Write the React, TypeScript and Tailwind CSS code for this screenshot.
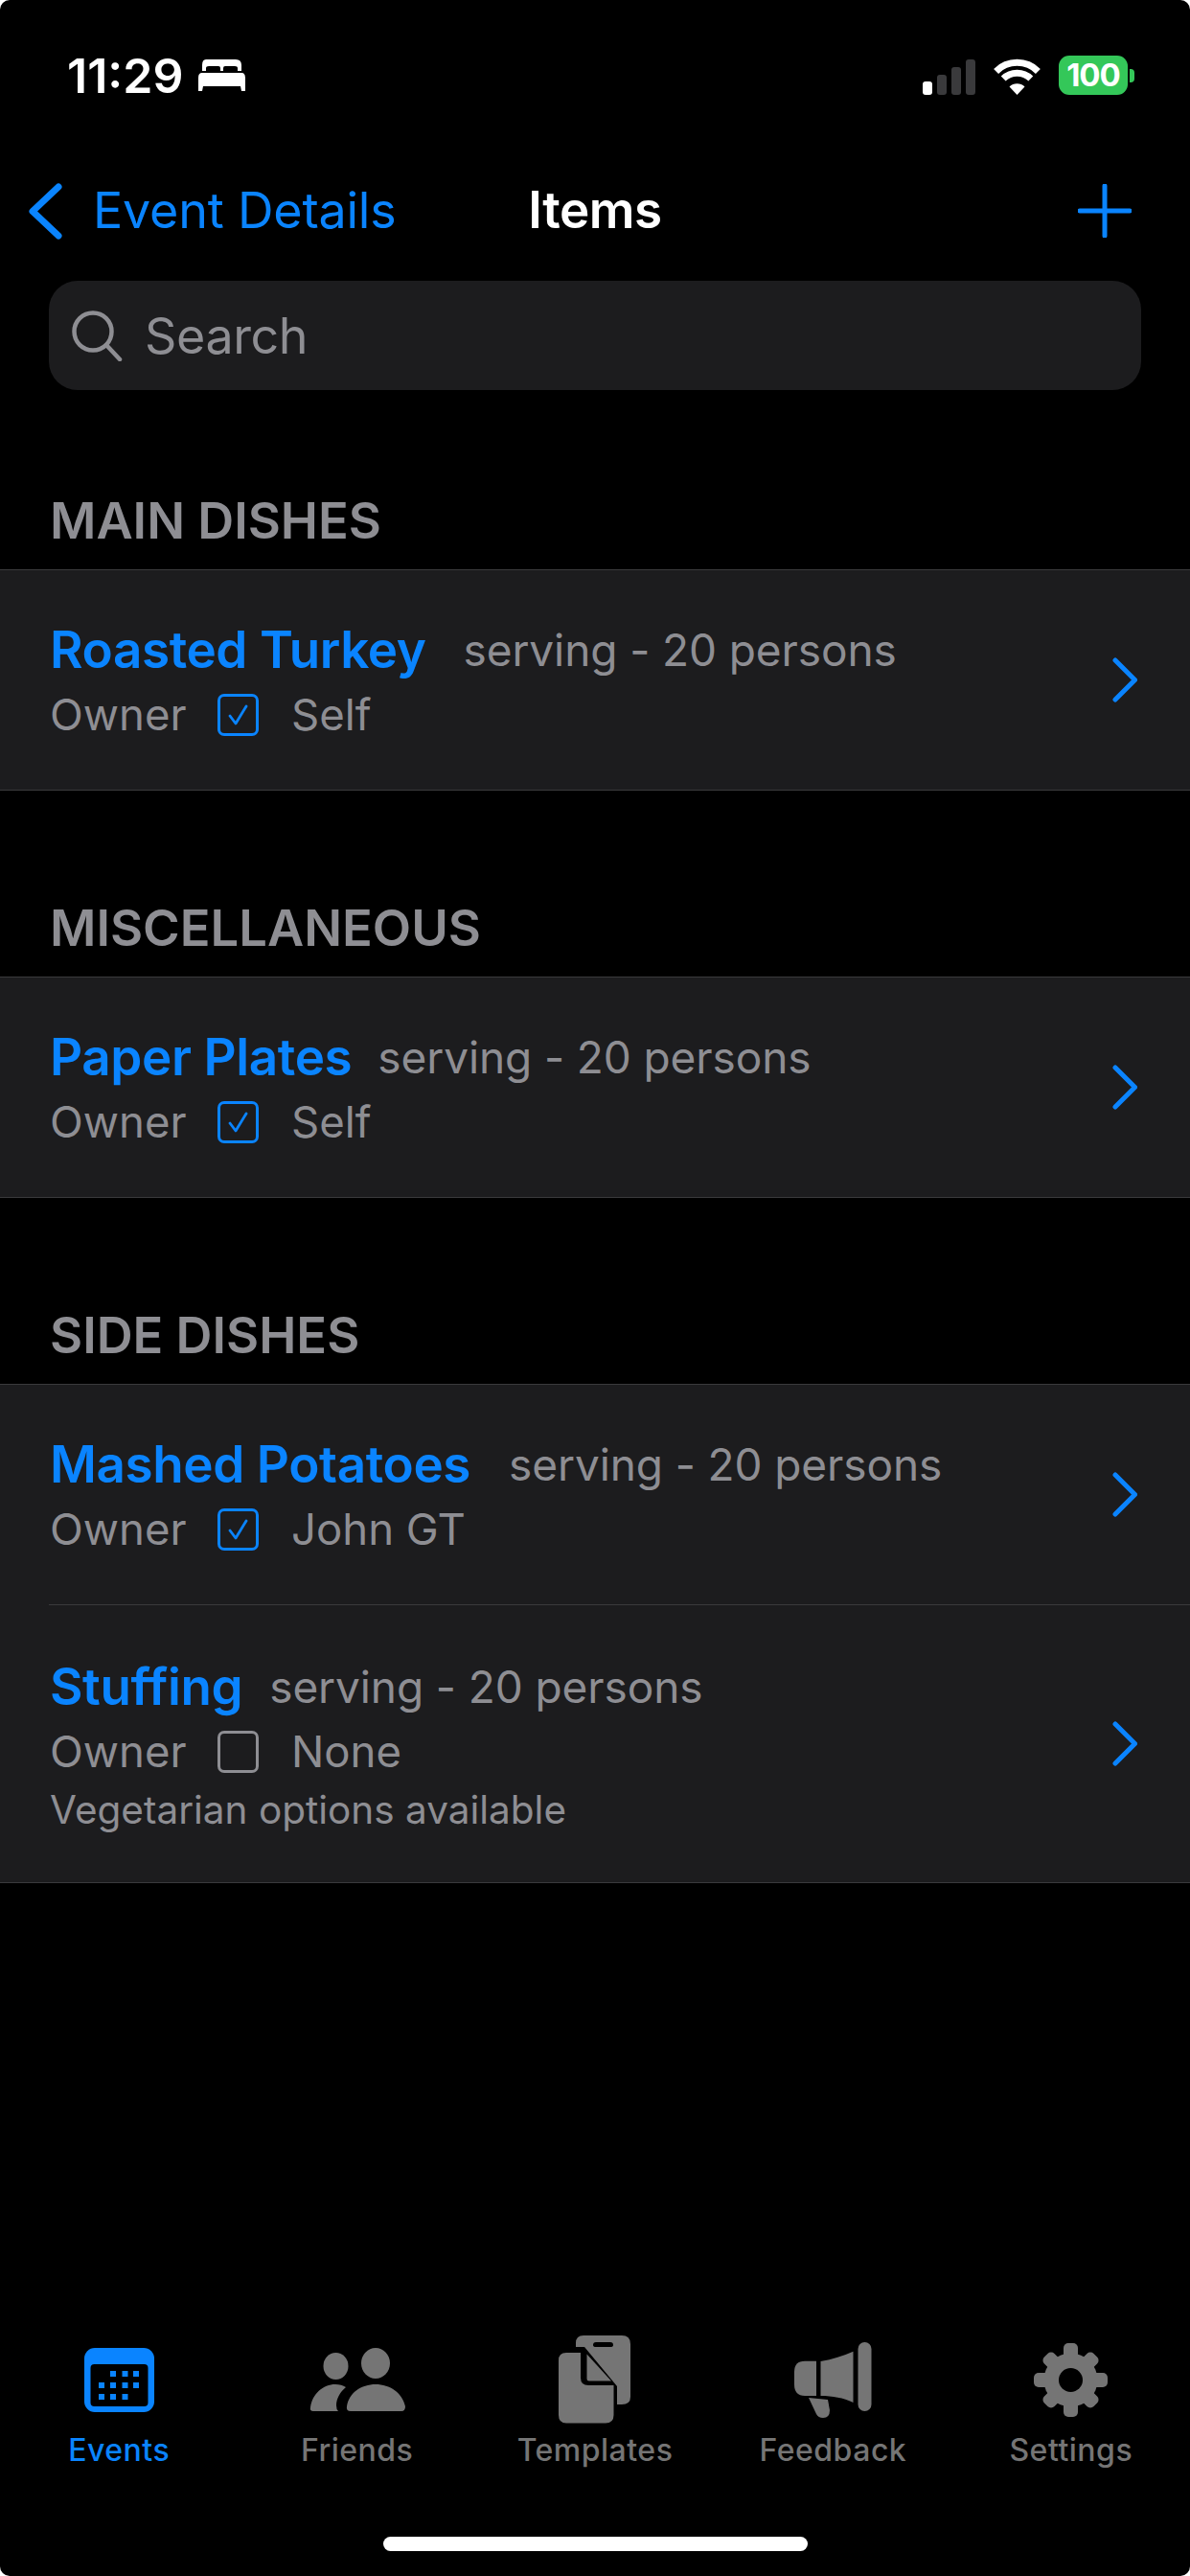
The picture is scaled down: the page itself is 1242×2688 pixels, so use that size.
import React from "react";

const BedIcon = () => (
  <svg width="49" height="33" viewBox="0 0 49 33" fill="#fff">
    <path d="M8 0H39Q45 0 45 6V12H41V9Q41 7 38 7H28Q26 7 26 9V12H23V9Q23 7 21 7H11Q8 7 8 9V12H4V6Q4 0 8 0Z" />
    <path d="M4 14H45Q49 14 49 19V33H45L44 28H5L4 33H0V19Q0 14 4 14Z" />
  </svg>
);

const SignalIcon = () => (
  <div className="flex items-end gap-[5px] h-[37px]">
    <div className="w-[10px] h-[14px] rounded-[3px] bg-white" />
    <div className="w-[10px] h-[21px] rounded-[3px] bg-[#3a3a3c]" />
    <div className="w-[10px] h-[29px] rounded-[3px] bg-[#3a3a3c]" />
    <div className="w-[10px] h-[37px] rounded-[3px] bg-[#3a3a3c]" />
  </div>
);

const WifiIcon = () => (
  <svg width="51" height="38" viewBox="0 0 51 38" fill="none" stroke="#fff" strokeWidth="7">
    <path d="M3.6 13.4A31 31 0 0 1 47.4 13.4" />
    <path d="M11.2 21A20.5 20.5 0 0 1 39.8 21" />
    <path d="M25.5 38L17.5 29.5A11.5 11.5 0 0 1 33.5 29.5Z" fill="#fff" stroke="none" />
  </svg>
);

const BatteryIcon = () => (
  <div className="flex items-center gap-[2px]">
    <div className="w-[72px] h-[41px] rounded-[11px] bg-[#34c759] flex items-center justify-center text-white font-bold text-[33px] leading-none tracking-[-1px]">
      100
    </div>
    <div className="w-[5px] h-[14px] rounded-r-[4px] bg-[#34c759]" />
  </div>
);

const BackChevron = () => (
  <svg width="35" height="59" viewBox="0 0 35 59" fill="none" stroke="#0a84ff" strokeWidth="7" strokeLinecap="round" strokeLinejoin="round">
    <path d="M31 4L4 29.5L31 55" />
  </svg>
);

const PlusIcon = () => (
  <svg width="56" height="56" viewBox="0 0 56 56" fill="none" stroke="#0a84ff" strokeWidth="5" strokeLinecap="round">
    <path d="M28 2V54M2 28H54" />
  </svg>
);

const SearchIcon = () => (
  <svg width="53" height="53" viewBox="0 0 53 53" fill="none" stroke="#8e8e93" strokeWidth="4.5" strokeLinecap="round">
    <circle cx="22" cy="22" r="19.5" />
    <path d="M36 36L50 51" />
  </svg>
);

const RowChevron = () => (
  <svg width="26" height="47" viewBox="0 0 26 47" fill="none" stroke="#0a84ff" strokeWidth="5" strokeLinecap="round" strokeLinejoin="round">
    <path d="M3 3L23.5 23.5L3 44" />
  </svg>
);

const CheckBox = ({ checked }: { checked: boolean }) => (
  <div
    className={`w-[43px] h-[44px] rounded-[7px] border-[3px] flex items-center justify-center ${
      checked ? "border-[#0a84ff]" : "border-[#8e8e93]"
    }`}
  >
    {checked && (
      <svg width="22" height="22" viewBox="0 0 22 22" fill="none" stroke="#0a84ff" strokeWidth="2.8" strokeLinecap="round" strokeLinejoin="round">
        <path d="M2 12L8 20L19 2" />
      </svg>
    )}
  </div>
);

const EventsIcon = () => (
  <svg width="73" height="67" viewBox="0 0 73 67">
    <rect width="73" height="67" rx="11" fill="#0a84ff" />
    <rect x="6.5" y="17" width="60" height="44" rx="4" fill="#000" />
    <g fill="#0a84ff">
      <rect x="27" y="24" width="6" height="6" />
      <rect x="39.5" y="24" width="6" height="6" />
      <rect x="51" y="24" width="6" height="6" />
      <rect x="15" y="36" width="6" height="6" />
      <rect x="27" y="36" width="6" height="6" />
      <rect x="39.5" y="36" width="6" height="6" />
      <rect x="51" y="36" width="6" height="6" />
      <rect x="15" y="48" width="6" height="6" />
      <rect x="27" y="48" width="6" height="6" />
      <rect x="39.5" y="48" width="6" height="6" />
    </g>
  </svg>
);

const FriendsIcon = () => (
  <svg width="100" height="66" viewBox="0 0 100 66" fill="#757575">
    <ellipse cx="27.5" cy="19" rx="13" ry="14" />
    <ellipse cx="69" cy="16" rx="15" ry="16" />
    <path d="M1 62C3 48 14 38 27 38C31 38 35 39 38 41C32 46 28 53 28 60Q28 64 30 66H4Q0 66 1 62Z" />
    <path d="M39 61C41 47 54 38 69 38C84 38 97 47 100 61Q100 66 96 66H43Q38 66 39 61Z" />
  </svg>
);

const TemplatesIcon = () => (
  <svg width="75" height="92" viewBox="0 0 75 92" fill="#757575">
    <path fillRule="evenodd" d="M26 0H66Q75 0 75 9V64Q75 72 66 72H61V53L27 12H18V8Q18 0 26 0ZM39 7Q36 7 36 10Q36 12 39 12H54Q57 12 57 10Q57 7 54 7Z" />
    <path d="M8 18H23V44Q23 52 31 52H57.5V83Q57.5 91.5 49 91.5H8Q0 91.5 0 83V26Q0 18 8 18Z" />
    <path d="M29.5 19.5L55 47.5H32Q29.5 47.5 29.5 45Z" />
  </svg>
);

const FeedbackIcon = () => (
  <svg width="81" height="79" viewBox="0 0 81 79" fill="#757575">
    <rect x="66.5" y="0" width="14" height="72" rx="7" />
    <path d="M27.5 20C40 18 51 14 61.5 9.7V63C51 58 40 56 27.5 56Z" />
    <path d="M11 19.7H23V56H11Q0 56 0 44V31Q0 19.7 11 19.7Z" />
    <path d="M15 58L35 60L37 71Q37 79 30 79Q25 79 23 75Z" />
  </svg>
);

const SettingsIcon = () => (
  <svg width="77" height="77" viewBox="0 0 77 77" fill="#757575">
    <circle cx="38.5" cy="38.5" r="28" />
    <rect x="31" y="0" width="15" height="77" rx="5" />
    <rect x="31" y="0" width="15" height="77" rx="5" transform="rotate(90 38.5 38.5)" />
    <rect x="31" y="2" width="15" height="73" rx="5" transform="rotate(45 38.5 38.5)" />
    <rect x="31" y="2" width="15" height="73" rx="5" transform="rotate(135 38.5 38.5)" />
    <circle cx="38.5" cy="38.5" r="12.5" fill="#000" />
  </svg>
);

const ItemRow = ({
  name,
  nameGap,
  owner,
  checked,
  note,
}: {
  name: string;
  nameGap: string;
  owner: string;
  checked: boolean;
  note?: string;
}) => (
  <div className="flex items-center justify-between pl-[52px] pr-[55px]">
    <div className={`flex flex-col ${note ? "pt-[55px] pb-[47px]" : "pt-[53px] pb-[48px]"}`}>
      <div className={`flex items-center h-[60px] ${nameGap}`}>
        <span className="text-[53px] leading-[60px] font-semibold text-[#0a84ff] tracking-[-0.4px]">{name}</span>
        <span className="text-[46px] leading-[60px] text-[#8e8e93] tracking-[-0.1px]">serving - 20 persons</span>
      </div>
      <div className="flex items-center h-[60px] mt-[8px] text-[45.5px] text-[#8e8e93]">
        <span className="w-[175px]">Owner</span>
        <CheckBox checked={checked} />
        <span className="ml-[34px]">{owner}</span>
      </div>
      {note && <div className="mt-[3px] text-[40.5px] leading-[56px] text-[#8e8e93]">{note}</div>}
    </div>
    <RowChevron />
  </div>
);

const Section = ({ title, children }: { title: string; children: React.ReactNode }) => (
  <section>
    <h2 className="h-[104px] pt-[3px] pl-[52px] flex items-center text-[52.5px] font-semibold text-[#8e8e93]">{title}</h2>
    <div className="bg-[#1c1c1e] border-y border-[#3a3a3c]">{children}</div>
  </section>
);

const tabs = [
  { label: "Events", icon: <EventsIcon />, active: true },
  { label: "Friends", icon: <FriendsIcon />, active: false },
  { label: "Templates", icon: <TemplatesIcon />, active: false },
  { label: "Feedback", icon: <FeedbackIcon />, active: false },
  { label: "Settings", icon: <SettingsIcon />, active: false },
];

export default function App() {
  return (
    <div className="w-[1242px] h-[2688px] bg-white" style={{ fontFamily: "Inter, 'Noto Sans', sans-serif" }}>
      <div className="w-full h-full bg-black rounded-[10px] flex flex-col overflow-hidden">
        {/* Status bar */}
        <div className="h-[170px] pt-[58px] pl-[70px] pr-[58px] flex items-start justify-between">
          <div className="flex items-center gap-[16px] h-[41px]">
            <span className="text-[50px] leading-none font-semibold text-white">11:29</span>
            <BedIcon />
          </div>
          <div className="flex items-end gap-[18px] h-[41px]">
            <SignalIcon />
            <WifiIcon />
            <BatteryIcon />
          </div>
        </div>

        {/* Nav */}
        <div className="h-[100px] grid grid-cols-[1fr_auto_1fr] items-center">
          <div className="flex items-center gap-[32px] pl-[30px]">
            <BackChevron />
            <span className="text-[52px] text-[#0a84ff] tracking-[-0.2px]">Event Details</span>
          </div>
          <span className="text-[53px] font-semibold text-white tracking-[-0.5px]">Items</span>
          <div className="flex justify-end pr-[61px]">
            <PlusIcon />
          </div>
        </div>

        {/* Search */}
        <div className="mt-[23px] mx-[51px] h-[114px] rounded-[30px] bg-[#1c1c1e] flex items-center pl-[24px] gap-[23px]">
          <SearchIcon />
          <span className="pt-[2px] text-[52px] text-[#8e8e93] tracking-[-0.4px]">Search</span>
        </div>

        {/* Lists */}
        <div className="mt-[83px] flex flex-col gap-[90px]">
          <Section title="MAIN DISHES">
            <ItemRow name="Roasted Turkey" nameGap="gap-[39px]" owner="Self" checked />
          </Section>
          <Section title="MISCELLANEOUS">
            <ItemRow name="Paper Plates" nameGap="gap-[27px]" owner="Self" checked />
          </Section>
          <Section title="SIDE DISHES">
            <ItemRow name="Mashed Potatoes" nameGap="gap-[40px]" owner="John GT" checked />
            <div className="ml-[51px] border-t border-[#3a3a3c]" />
            <ItemRow
              name="Stuffing"
              nameGap="gap-[28px]"
              owner="None"
              checked={false}
              note="Vegetarian options available"
            />
          </Section>
        </div>

        {/* Tab bar */}
        <div className="mt-auto grid grid-cols-5">
          {tabs.map((tab) => (
            <div key={tab.label} className="flex flex-col items-center">
              <div className="h-[92px] flex items-center">{tab.icon}</div>
              <span
                className={`mt-[8px] text-[32px] leading-[40px] font-medium tracking-[0.5px] ${
                  tab.active ? "text-[#0a84ff]" : "text-[#757575]"
                }`}
              >
                {tab.label}
              </span>
            </div>
          ))}
        </div>
        <div className="mt-[70px] mb-[26px] mx-auto w-[443px] h-[15px] rounded-full bg-white" />
      </div>
    </div>
  );
}
